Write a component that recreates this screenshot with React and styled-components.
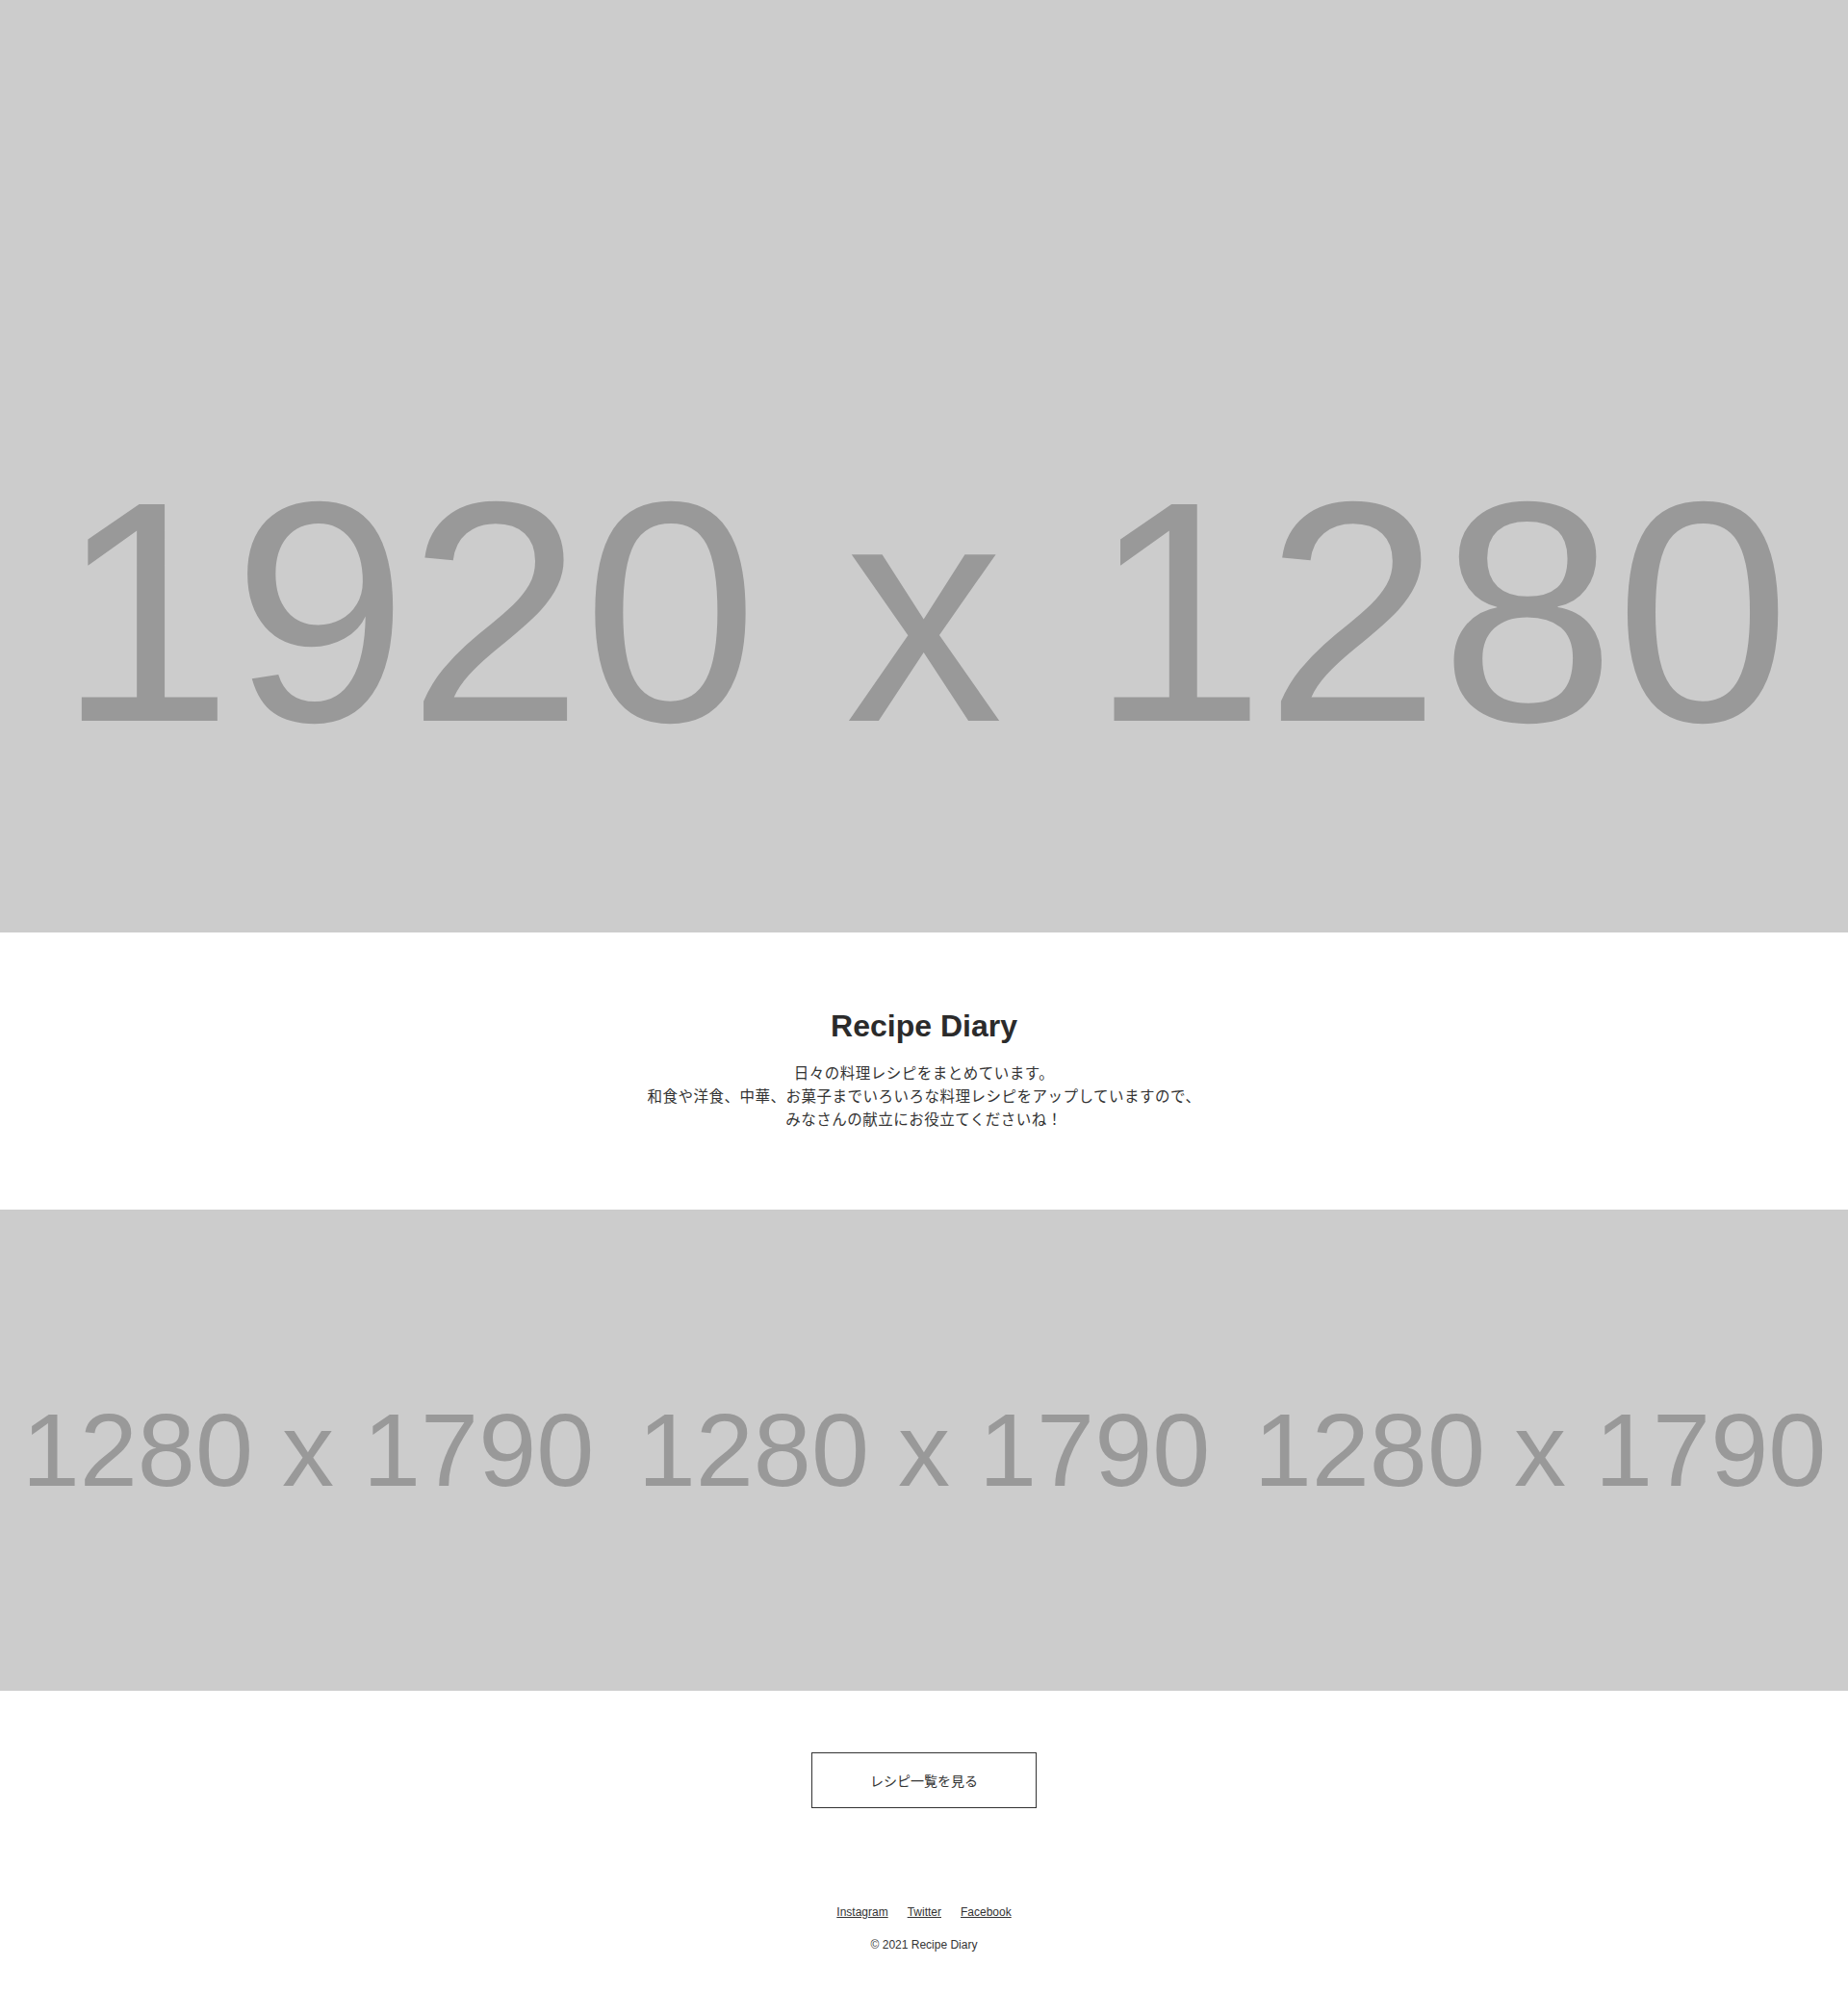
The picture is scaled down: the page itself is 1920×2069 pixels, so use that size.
import React from 'react'
import styled, { createGlobalStyle } from 'styled-components'

const GlobalStyle = createGlobalStyle`
    body {
        margin: 0;
        background: #fff;
        color: #333;
        font-family: "Liberation Sans", "Noto Sans CJK JP", sans-serif;
    }
`

function App() {
    return (
        <Page>
            <GlobalStyle />
            <Hero>
                <HeroImage>1920 x 1280</HeroImage>
            </Hero>

            <Intro>
                <Title>Recipe Diary</Title>
                <Lead>
                    日々の料理レシピをまとめています。<br />
                    和食や洋食、中華、お菓子までいろいろな料理レシピをアップしていますので、<br />
                    みなさんの献立にお役立てくださいね！
                </Lead>
            </Intro>

            <Gallery>
                {[0, 1, 2].map(i => (
                    <Photo key={i}>
                        <PhotoImage>1280 x 1790</PhotoImage>
                    </Photo>
                ))}
            </Gallery>

            <More>
                <MoreButton href="#">レシピ一覧を見る</MoreButton>
            </More>

            <Footer>
                <Links>
                    <a href="#">Instagram</a>
                    <a href="#">Twitter</a>
                    <a href="#">Facebook</a>
                </Links>
                <Copy>© 2021 Recipe Diary</Copy>
            </Footer>
        </Page>
    )
}

export default App

const Page = styled.div`
    width: 100%;
`

const Placeholder = styled.div`
    background: #cccccc;
    color: #999999;
    font-family: "Liberation Sans", Arial, sans-serif;
    display: flex;
    align-items: center;
    justify-content: center;
    white-space: nowrap;
    line-height: 1;
`

const Hero = styled.div`
    height: 969px;
    overflow: hidden;
`

const HeroImage = styled(Placeholder)`
    height: 1270px;
    font-size: 327px;
`

const Intro = styled.section`
    padding: 78px 0 81px;
    text-align: center;
`

const Title = styled.h1`
    margin: 0 0 19px;
    font-size: 32px;
    line-height: 1.2;
    font-weight: 700;
    color: #2b2b2b;
`

const Lead = styled.p`
    margin: 0;
    font-size: 15.5px;
    letter-spacing: 0.5px;
    line-height: 24px;
    color: #333;
`

const Gallery = styled.div`
    display: grid;
    grid-template-columns: repeat(3, 1fr);
    height: 500px;
`

const Photo = styled.div`
    overflow: hidden;
`

const PhotoImage = styled(Placeholder)`
    height: 500px;
    font-size: 108px;
`

const More = styled.div`
    display: flex;
    justify-content: center;
    padding-top: 64px;
`

const MoreButton = styled.a`
    box-sizing: border-box;
    width: 234px;
    height: 58px;
    border: 1px solid #333;
    display: flex;
    align-items: center;
    justify-content: center;
    font-size: 14px;
    color: #333;
    text-decoration: none;
`

const Footer = styled.footer`
    padding: 99px 0 38px;
    display: flex;
    flex-direction: column;
    align-items: center;
    gap: 16px;
    font-size: 12px;
    line-height: 18px;
`

const Links = styled.div`
    display: flex;
    gap: 20px;

    a {
        color: #333;
        text-decoration: underline;
    }
`

const Copy = styled.small`
    font-size: 12px;
    color: #333;
`
